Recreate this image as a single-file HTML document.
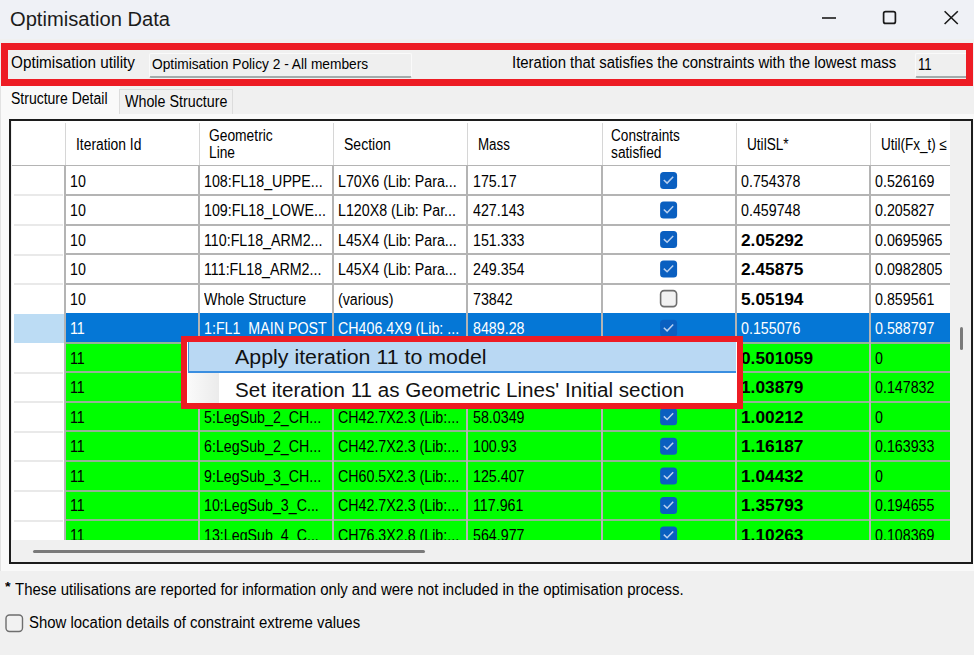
<!DOCTYPE html>
<html><head><meta charset="utf-8"><title>Optimisation Data</title>
<style>
html,body{margin:0;padding:0}
body{width:974px;height:655px;overflow:hidden;position:relative;background:#F0F0F0;font-family:"Liberation Sans",sans-serif;color:#000}
.a{position:absolute}
.t{position:absolute;white-space:nowrap;line-height:1;transform-origin:0 0}
</style></head><body>
<div class="a" style="left:0px;top:0px;width:974px;height:39px;background:#EFF1F6"></div>
<div class="t" style="left:9.60px;top:8.57px;font-size:20px;transform:scaleX(1.0070);color:#1b1b1b">Optimisation Data</div>
<svg class="a" style="left:0;top:0" width="974" height="40">
<line x1="822" y1="18" x2="836" y2="18" stroke="#1a1a1a" stroke-width="1.6"/>
<rect x="883.6" y="11.6" width="11.8" height="11.8" rx="2" fill="none" stroke="#1a1a1a" stroke-width="1.7"/>
<path d="M944.6 11.2 L957.8 24 M957.8 11.2 L944.6 24" stroke="#1a1a1a" stroke-width="1.6" fill="none"/>
</svg>
<div class="a" style="left:1px;top:43px;width:972px;height:43px;box-sizing:border-box;border:7px solid #ED1C24"></div>
<div class="t" style="left:11.00px;top:55.46px;font-size:16px;transform:scaleX(0.9551);">Optimisation utility</div>
<div class="a" style="left:149px;top:52.5px;width:263px;height:25.3px;box-sizing:border-box;background:#EFEFEF;border:1.5px solid #FAFAFA;border-bottom:2px solid #A3AAAA;border-radius:2px"></div>
<div class="t" style="left:151.50px;top:56.40px;font-size:15px;transform:scaleX(0.9165);">Optimisation Policy 2 - All members</div>
<div class="t" style="left:511.70px;top:55.36px;font-size:16px;transform:scaleX(0.9333);">Iteration that satisfies the constraints with the lowest mass</div>
<div class="a" style="left:915px;top:52.5px;width:51px;height:25.3px;box-sizing:border-box;background:#EFEFEF;border:1.5px solid #FAFAFA;border-right:none;border-bottom:2px solid #A3AAAA;border-radius:2px 0 0 2px"></div>
<div class="t" style="left:918.30px;top:57.16px;font-size:16px;transform:scaleX(0.8249);">11</div>
<div class="a" style="left:0px;top:113.5px;width:974px;height:457px;background:#F9F9F9;border-left:1.5px solid #E2E2E2"></div>
<div class="a" style="left:0px;top:86px;width:118.5px;height:28px;background:#F9F9F9;border-left:1.5px solid #E2E2E2"></div>
<div class="a" style="left:118.5px;top:88.5px;width:114px;height:25px;box-sizing:border-box;background:#F0F0F0;border:1px solid #DCDCDC;border-bottom:none"></div>
<div class="t" style="left:11.00px;top:91.46px;font-size:16px;transform:scaleX(0.8751);">Structure Detail</div>
<div class="t" style="left:124.60px;top:93.96px;font-size:16px;transform:scaleX(0.8927);">Whole Structure</div>
<div class="a" style="left:9px;top:119px;width:964px;height:445px;box-sizing:border-box;border:2px solid #1C1C1C;background:#F0F0F0"></div>
<div class="a" style="left:12px;top:121px;width:938px;height:44px;background:#fff"></div>
<div class="a" style="left:65px;top:123px;width:1px;height:42px;background:#D6D6D6"></div>
<div class="a" style="left:199px;top:123px;width:1px;height:42px;background:#D6D6D6"></div>
<div class="a" style="left:333px;top:123px;width:1px;height:42px;background:#D6D6D6"></div>
<div class="a" style="left:467px;top:123px;width:1px;height:42px;background:#D6D6D6"></div>
<div class="a" style="left:602px;top:123px;width:1px;height:42px;background:#D6D6D6"></div>
<div class="a" style="left:736px;top:123px;width:1px;height:42px;background:#D6D6D6"></div>
<div class="a" style="left:870px;top:123px;width:1px;height:42px;background:#D6D6D6"></div>
<div class="a" style="left:12px;top:165px;width:938px;height:2px;background:#B4B4B4"></div>
<div class="t" style="left:75.80px;top:136.96px;font-size:16px;transform:scaleX(0.8651);">Iteration Id</div>
<div class="t" style="left:209.00px;top:127.56px;font-size:16px;transform:scaleX(0.8632);">Geometric</div>
<div class="t" style="left:209.00px;top:145.06px;font-size:16px;transform:scaleX(0.8600);">Line</div>
<div class="t" style="left:343.80px;top:136.96px;font-size:16px;transform:scaleX(0.8752);">Section</div>
<div class="t" style="left:478.10px;top:136.96px;font-size:16px;transform:scaleX(0.8346);">Mass</div>
<div class="t" style="left:611.40px;top:127.56px;font-size:16px;transform:scaleX(0.8514);">Constraints</div>
<div class="t" style="left:611.40px;top:145.06px;font-size:16px;transform:scaleX(0.8600);">satisfied</div>
<div class="t" style="left:746.80px;top:136.96px;font-size:16px;transform:scaleX(0.8505);">UtilSL*</div>
<div class="t" style="left:880.60px;top:136.96px;font-size:16px;transform:scaleX(0.8449);">Util(Fx_t) ≤</div>
<div class="a" style="left:12px;top:166px;width:938px;height:374px;overflow:hidden">
<div class="a" style="left:0px;top:0px;width:938px;height:374px;background:#fff"></div>
<div class="a" style="left:54px;top:-0.5px;width:884px;height:29.6px;background:#fff"></div>
<div class="a" style="left:54px;top:29.1px;width:884px;height:29.6px;background:#fff"></div>
<div class="a" style="left:54px;top:58.6px;width:884px;height:29.6px;background:#fff"></div>
<div class="a" style="left:54px;top:88.2px;width:884px;height:29.6px;background:#fff"></div>
<div class="a" style="left:54px;top:117.7px;width:884px;height:29.6px;background:#fff"></div>
<div class="a" style="left:2px;top:147.7px;width:51px;height:29.2px;background:#BCDCF4"></div>
<div class="a" style="left:54px;top:147.2px;width:884px;height:29.6px;background:#0577D6"></div>
<div class="a" style="left:54px;top:176.8px;width:884px;height:29.6px;background:#00FF00"></div>
<div class="a" style="left:54px;top:206.4px;width:884px;height:29.6px;background:#00FF00"></div>
<div class="a" style="left:54px;top:235.9px;width:884px;height:29.6px;background:#00FF00"></div>
<div class="a" style="left:54px;top:265.4px;width:884px;height:29.6px;background:#00FF00"></div>
<div class="a" style="left:54px;top:295.0px;width:884px;height:29.6px;background:#00FF00"></div>
<div class="a" style="left:54px;top:324.6px;width:884px;height:29.6px;background:#00FF00"></div>
<div class="a" style="left:54px;top:354.1px;width:884px;height:29.6px;background:#00FF00"></div>
<div class="a" style="left:2px;top:28.4px;width:49px;height:2px;background:#E9E9E9"></div>
<div class="a" style="left:53px;top:28.1px;width:885px;height:2px;background:#B4B4B4"></div>
<div class="a" style="left:2px;top:58.0px;width:49px;height:2px;background:#E9E9E9"></div>
<div class="a" style="left:53px;top:57.6px;width:885px;height:2px;background:#B4B4B4"></div>
<div class="a" style="left:2px;top:87.5px;width:49px;height:2px;background:#E9E9E9"></div>
<div class="a" style="left:53px;top:87.1px;width:885px;height:2px;background:#B4B4B4"></div>
<div class="a" style="left:2px;top:117.1px;width:49px;height:2px;background:#E9E9E9"></div>
<div class="a" style="left:53px;top:116.7px;width:885px;height:2px;background:#B4B4B4"></div>
<div class="a" style="left:53px;top:175.8px;width:885px;height:2px;background:#94B494"></div>
<div class="a" style="left:2px;top:205.8px;width:49px;height:2px;background:#E9E9E9"></div>
<div class="a" style="left:53px;top:205.4px;width:885px;height:2px;background:#94B494"></div>
<div class="a" style="left:2px;top:235.3px;width:49px;height:2px;background:#E9E9E9"></div>
<div class="a" style="left:53px;top:234.9px;width:885px;height:2px;background:#94B494"></div>
<div class="a" style="left:2px;top:264.8px;width:49px;height:2px;background:#E9E9E9"></div>
<div class="a" style="left:53px;top:264.4px;width:885px;height:2px;background:#94B494"></div>
<div class="a" style="left:2px;top:294.4px;width:49px;height:2px;background:#E9E9E9"></div>
<div class="a" style="left:53px;top:294.0px;width:885px;height:2px;background:#94B494"></div>
<div class="a" style="left:2px;top:323.9px;width:49px;height:2px;background:#E9E9E9"></div>
<div class="a" style="left:53px;top:323.6px;width:885px;height:2px;background:#94B494"></div>
<div class="a" style="left:2px;top:353.5px;width:49px;height:2px;background:#E9E9E9"></div>
<div class="a" style="left:53px;top:353.1px;width:885px;height:2px;background:#94B494"></div>
<div class="a" style="left:2px;top:383.1px;width:49px;height:2px;background:#E9E9E9"></div>
<div class="a" style="left:53px;top:382.7px;width:885px;height:2px;background:#94B494"></div>
<div class="a" style="left:186.2px;top:0px;width:2px;height:374px;background:#B4B4B4"></div>
<div class="a" style="left:320.3px;top:0px;width:2px;height:374px;background:#B4B4B4"></div>
<div class="a" style="left:454.4px;top:0px;width:2px;height:374px;background:#B4B4B4"></div>
<div class="a" style="left:588.5px;top:0px;width:2px;height:374px;background:#B4B4B4"></div>
<div class="a" style="left:722.6px;top:0px;width:2px;height:374px;background:#B4B4B4"></div>
<div class="a" style="left:856.7px;top:0px;width:2px;height:374px;background:#B4B4B4"></div>
<div class="t" style="left:58.10px;top:7.56px;font-size:16px;transform:scaleX(0.8900);color:#000">10</div>
<div class="t" style="left:192.30px;top:7.56px;font-size:16px;transform:scaleX(0.8900);color:#000">108:FL18_UPPE...</div>
<div class="t" style="left:326.40px;top:7.56px;font-size:16px;transform:scaleX(0.8900);color:#000">L70X6 (Lib: Para...</div>
<div class="t" style="left:460.50px;top:7.56px;font-size:16px;transform:scaleX(0.8900);color:#000">175.17</div>
<svg class="a" style="left:647px;top:5px" width="20" height="20"><g transform="translate(0.60,0.40)"><rect x="0.5" y="0.5" width="17" height="17" rx="3.5" fill="#0A5FC0"/><path d="M4.2 8.6 L7.5 11.7 L13.6 5.4" stroke="#B8D0F0" stroke-width="1.5" fill="none"/></g></svg>
<div class="t" style="left:728.70px;top:7.56px;font-size:16px;transform:scaleX(0.8900);color:#000">0.754378</div>
<div class="t" style="left:862.80px;top:7.56px;font-size:16px;transform:scaleX(0.8900);color:#000">0.526169</div>
<div class="t" style="left:58.10px;top:37.09px;font-size:16px;transform:scaleX(0.8900);color:#000">10</div>
<div class="t" style="left:192.30px;top:37.09px;font-size:16px;transform:scaleX(0.8900);color:#000">109:FL18_LOWE...</div>
<div class="t" style="left:326.40px;top:37.09px;font-size:16px;transform:scaleX(0.8900);color:#000">L120X8 (Lib: Par...</div>
<div class="t" style="left:460.50px;top:37.09px;font-size:16px;transform:scaleX(0.8900);color:#000">427.143</div>
<svg class="a" style="left:647px;top:34px" width="20" height="20"><g transform="translate(0.60,0.95)"><rect x="0.5" y="0.5" width="17" height="17" rx="3.5" fill="#0A5FC0"/><path d="M4.2 8.6 L7.5 11.7 L13.6 5.4" stroke="#B8D0F0" stroke-width="1.5" fill="none"/></g></svg>
<div class="t" style="left:728.70px;top:37.09px;font-size:16px;transform:scaleX(0.8900);color:#000">0.459748</div>
<div class="t" style="left:862.80px;top:37.09px;font-size:16px;transform:scaleX(0.8900);color:#000">0.205827</div>
<div class="t" style="left:58.10px;top:66.62px;font-size:16px;transform:scaleX(0.8900);color:#000">10</div>
<div class="t" style="left:192.30px;top:66.62px;font-size:16px;transform:scaleX(0.8900);color:#000">110:FL18_ARM2...</div>
<div class="t" style="left:326.40px;top:66.62px;font-size:16px;transform:scaleX(0.8900);color:#000">L45X4 (Lib: Para...</div>
<div class="t" style="left:460.50px;top:66.62px;font-size:16px;transform:scaleX(0.8900);color:#000">151.333</div>
<svg class="a" style="left:647px;top:64px" width="20" height="20"><g transform="translate(0.60,0.50)"><rect x="0.5" y="0.5" width="17" height="17" rx="3.5" fill="#0A5FC0"/><path d="M4.2 8.6 L7.5 11.7 L13.6 5.4" stroke="#B8D0F0" stroke-width="1.5" fill="none"/></g></svg>
<div class="t" style="left:728.70px;top:66.62px;font-size:16px;transform:scaleX(1.0800);font-weight:bold;color:#000">2.05292</div>
<div class="t" style="left:862.80px;top:66.62px;font-size:16px;transform:scaleX(0.8900);color:#000">0.0695965</div>
<div class="t" style="left:58.10px;top:96.15px;font-size:16px;transform:scaleX(0.8900);color:#000">10</div>
<div class="t" style="left:192.30px;top:96.15px;font-size:16px;transform:scaleX(0.8900);color:#000">111:FL18_ARM2...</div>
<div class="t" style="left:326.40px;top:96.15px;font-size:16px;transform:scaleX(0.8900);color:#000">L45X4 (Lib: Para...</div>
<div class="t" style="left:460.50px;top:96.15px;font-size:16px;transform:scaleX(0.8900);color:#000">249.354</div>
<svg class="a" style="left:647px;top:94px" width="20" height="20"><g transform="translate(0.60,0.05)"><rect x="0.5" y="0.5" width="17" height="17" rx="3.5" fill="#0A5FC0"/><path d="M4.2 8.6 L7.5 11.7 L13.6 5.4" stroke="#B8D0F0" stroke-width="1.5" fill="none"/></g></svg>
<div class="t" style="left:728.70px;top:96.15px;font-size:16px;transform:scaleX(1.0800);font-weight:bold;color:#000">2.45875</div>
<div class="t" style="left:862.80px;top:96.15px;font-size:16px;transform:scaleX(0.8900);color:#000">0.0982805</div>
<div class="t" style="left:58.10px;top:125.68px;font-size:16px;transform:scaleX(0.8900);color:#000">10</div>
<div class="t" style="left:192.30px;top:125.68px;font-size:16px;transform:scaleX(0.8900);color:#000">Whole Structure</div>
<div class="t" style="left:326.40px;top:125.68px;font-size:16px;transform:scaleX(0.8900);color:#000">(various)</div>
<div class="t" style="left:460.50px;top:125.68px;font-size:16px;transform:scaleX(0.8900);color:#000">73842</div>
<svg class="a" style="left:647px;top:123px" width="20" height="20"><g transform="translate(0.60,0.60)"><rect x="1" y="1" width="16" height="16" rx="3.5" fill="#F2F2F2" stroke="#6E6E6E" stroke-width="1.6"/></g></svg>
<div class="t" style="left:728.70px;top:125.68px;font-size:16px;transform:scaleX(1.0800);font-weight:bold;color:#000">5.05194</div>
<div class="t" style="left:862.80px;top:125.68px;font-size:16px;transform:scaleX(0.8900);color:#000">0.859561</div>
<div class="t" style="left:58.10px;top:155.21px;font-size:16px;transform:scaleX(0.8900);color:#fff">11</div>
<div class="t" style="left:192.30px;top:155.21px;font-size:16px;transform:scaleX(0.8900);color:#fff">1:FL1_MAIN POST</div>
<div class="t" style="left:326.40px;top:155.21px;font-size:16px;transform:scaleX(0.8900);color:#fff">CH406.4X9 (Lib: ...</div>
<div class="t" style="left:460.50px;top:155.21px;font-size:16px;transform:scaleX(0.8900);color:#fff">8489.28</div>
<svg class="a" style="left:647px;top:153px" width="20" height="20"><g transform="translate(0.60,0.15)"><rect x="0.5" y="0.5" width="17" height="17" rx="3.5" fill="#0A5FC0"/><path d="M4.2 8.6 L7.5 11.7 L13.6 5.4" stroke="#B8D0F0" stroke-width="1.5" fill="none"/></g></svg>
<div class="t" style="left:728.70px;top:155.21px;font-size:16px;transform:scaleX(0.8900);color:#fff">0.155076</div>
<div class="t" style="left:862.80px;top:155.21px;font-size:16px;transform:scaleX(0.8900);color:#fff">0.588797</div>
<div class="t" style="left:58.10px;top:184.74px;font-size:16px;transform:scaleX(0.8900);color:#000">11</div>
<div class="t" style="left:192.30px;top:184.74px;font-size:16px;transform:scaleX(0.8900);color:#000">3:LegSub_1_CH...</div>
<div class="t" style="left:326.40px;top:184.74px;font-size:16px;transform:scaleX(0.8900);color:#000">CH48.6X2.3 (Lib:...</div>
<div class="t" style="left:460.50px;top:184.74px;font-size:16px;transform:scaleX(0.8900);color:#000">40.6148</div>
<svg class="a" style="left:647px;top:182px" width="20" height="20"><g transform="translate(0.60,0.70)"><rect x="0.5" y="0.5" width="17" height="17" rx="3.5" fill="#0A5FC0"/><path d="M4.2 8.6 L7.5 11.7 L13.6 5.4" stroke="#B8D0F0" stroke-width="1.5" fill="none"/></g></svg>
<div class="t" style="left:728.70px;top:184.74px;font-size:16px;transform:scaleX(1.0800);font-weight:bold;color:#000">0.501059</div>
<div class="t" style="left:862.80px;top:184.74px;font-size:16px;transform:scaleX(0.8900);color:#000">0</div>
<div class="t" style="left:58.10px;top:214.27px;font-size:16px;transform:scaleX(0.8900);color:#000">11</div>
<div class="t" style="left:192.30px;top:214.27px;font-size:16px;transform:scaleX(0.8900);color:#000">4:LegSub_1_CH...</div>
<div class="t" style="left:326.40px;top:214.27px;font-size:16px;transform:scaleX(0.8900);color:#000">CH42.7X2.3 (Lib:...</div>
<div class="t" style="left:460.50px;top:214.27px;font-size:16px;transform:scaleX(0.8900);color:#000">63.1427</div>
<svg class="a" style="left:647px;top:212px" width="20" height="20"><g transform="translate(0.60,0.25)"><rect x="0.5" y="0.5" width="17" height="17" rx="3.5" fill="#0A5FC0"/><path d="M4.2 8.6 L7.5 11.7 L13.6 5.4" stroke="#B8D0F0" stroke-width="1.5" fill="none"/></g></svg>
<div class="t" style="left:728.70px;top:214.27px;font-size:16px;transform:scaleX(1.0800);font-weight:bold;color:#000">1.03879</div>
<div class="t" style="left:862.80px;top:214.27px;font-size:16px;transform:scaleX(0.8900);color:#000">0.147832</div>
<div class="t" style="left:58.10px;top:243.80px;font-size:16px;transform:scaleX(0.8900);color:#000">11</div>
<div class="t" style="left:192.30px;top:243.80px;font-size:16px;transform:scaleX(0.8900);color:#000">5:LegSub_2_CH...</div>
<div class="t" style="left:326.40px;top:243.80px;font-size:16px;transform:scaleX(0.8900);color:#000">CH42.7X2.3 (Lib:...</div>
<div class="t" style="left:460.50px;top:243.80px;font-size:16px;transform:scaleX(0.8900);color:#000">58.0349</div>
<svg class="a" style="left:647px;top:241px" width="20" height="20"><g transform="translate(0.60,0.80)"><rect x="0.5" y="0.5" width="17" height="17" rx="3.5" fill="#0A5FC0"/><path d="M4.2 8.6 L7.5 11.7 L13.6 5.4" stroke="#B8D0F0" stroke-width="1.5" fill="none"/></g></svg>
<div class="t" style="left:728.70px;top:243.80px;font-size:16px;transform:scaleX(1.0800);font-weight:bold;color:#000">1.00212</div>
<div class="t" style="left:862.80px;top:243.80px;font-size:16px;transform:scaleX(0.8900);color:#000">0</div>
<div class="t" style="left:58.10px;top:273.33px;font-size:16px;transform:scaleX(0.8900);color:#000">11</div>
<div class="t" style="left:192.30px;top:273.33px;font-size:16px;transform:scaleX(0.8900);color:#000">6:LegSub_2_CH...</div>
<div class="t" style="left:326.40px;top:273.33px;font-size:16px;transform:scaleX(0.8900);color:#000">CH42.7X2.3 (Lib:...</div>
<div class="t" style="left:460.50px;top:273.33px;font-size:16px;transform:scaleX(0.8900);color:#000">100.93</div>
<svg class="a" style="left:647px;top:271px" width="20" height="20"><g transform="translate(0.60,0.35)"><rect x="0.5" y="0.5" width="17" height="17" rx="3.5" fill="#0A5FC0"/><path d="M4.2 8.6 L7.5 11.7 L13.6 5.4" stroke="#B8D0F0" stroke-width="1.5" fill="none"/></g></svg>
<div class="t" style="left:728.70px;top:273.33px;font-size:16px;transform:scaleX(1.0800);font-weight:bold;color:#000">1.16187</div>
<div class="t" style="left:862.80px;top:273.33px;font-size:16px;transform:scaleX(0.8900);color:#000">0.163933</div>
<div class="t" style="left:58.10px;top:302.86px;font-size:16px;transform:scaleX(0.8900);color:#000">11</div>
<div class="t" style="left:192.30px;top:302.86px;font-size:16px;transform:scaleX(0.8900);color:#000">9:LegSub_3_CH...</div>
<div class="t" style="left:326.40px;top:302.86px;font-size:16px;transform:scaleX(0.8900);color:#000">CH60.5X2.3 (Lib:...</div>
<div class="t" style="left:460.50px;top:302.86px;font-size:16px;transform:scaleX(0.8900);color:#000">125.407</div>
<svg class="a" style="left:647px;top:300px" width="20" height="20"><g transform="translate(0.60,0.90)"><rect x="0.5" y="0.5" width="17" height="17" rx="3.5" fill="#0A5FC0"/><path d="M4.2 8.6 L7.5 11.7 L13.6 5.4" stroke="#B8D0F0" stroke-width="1.5" fill="none"/></g></svg>
<div class="t" style="left:728.70px;top:302.86px;font-size:16px;transform:scaleX(1.0800);font-weight:bold;color:#000">1.04432</div>
<div class="t" style="left:862.80px;top:302.86px;font-size:16px;transform:scaleX(0.8900);color:#000">0</div>
<div class="t" style="left:58.10px;top:332.39px;font-size:16px;transform:scaleX(0.8900);color:#000">11</div>
<div class="t" style="left:192.30px;top:332.39px;font-size:16px;transform:scaleX(0.8900);color:#000">10:LegSub_3_C...</div>
<div class="t" style="left:326.40px;top:332.39px;font-size:16px;transform:scaleX(0.8900);color:#000">CH42.7X2.3 (Lib:...</div>
<div class="t" style="left:460.50px;top:332.39px;font-size:16px;transform:scaleX(0.8900);color:#000">117.961</div>
<svg class="a" style="left:647px;top:330px" width="20" height="20"><g transform="translate(0.60,0.45)"><rect x="0.5" y="0.5" width="17" height="17" rx="3.5" fill="#0A5FC0"/><path d="M4.2 8.6 L7.5 11.7 L13.6 5.4" stroke="#B8D0F0" stroke-width="1.5" fill="none"/></g></svg>
<div class="t" style="left:728.70px;top:332.39px;font-size:16px;transform:scaleX(1.0800);font-weight:bold;color:#000">1.35793</div>
<div class="t" style="left:862.80px;top:332.39px;font-size:16px;transform:scaleX(0.8900);color:#000">0.194655</div>
<div class="t" style="left:58.10px;top:361.92px;font-size:16px;transform:scaleX(0.8900);color:#000">11</div>
<div class="t" style="left:192.30px;top:361.92px;font-size:16px;transform:scaleX(0.8900);color:#000">13:LegSub_4_C...</div>
<div class="t" style="left:326.40px;top:361.92px;font-size:16px;transform:scaleX(0.8900);color:#000">CH76.3X2.8 (Lib:...</div>
<div class="t" style="left:460.50px;top:361.92px;font-size:16px;transform:scaleX(0.8900);color:#000">564.977</div>
<svg class="a" style="left:647px;top:360px" width="20" height="20"><g transform="translate(0.60,0.00)"><rect x="0.5" y="0.5" width="17" height="17" rx="3.5" fill="#0A5FC0"/><path d="M4.2 8.6 L7.5 11.7 L13.6 5.4" stroke="#B8D0F0" stroke-width="1.5" fill="none"/></g></svg>
<div class="t" style="left:728.70px;top:361.92px;font-size:16px;transform:scaleX(1.0800);font-weight:bold;color:#000">1.10263</div>
<div class="t" style="left:862.80px;top:361.92px;font-size:16px;transform:scaleX(0.8900);color:#000">0.108369</div>
</div>
<div class="a" style="left:64px;top:166px;width:2px;height:374px;background:#B4B4B4"></div>
<div class="a" style="left:950px;top:121px;width:21px;height:419px;background:#F0F0F0"></div>
<div class="a" style="left:960px;top:327px;width:3px;height:23px;background:#7A7A7A;border-radius:1.5px"></div>
<div class="a" style="left:12px;top:540px;width:959px;height:22px;background:#F0F0F0"></div>
<div class="a" style="left:33px;top:550px;width:392px;height:3px;background:#7A7A7A;border-radius:1.5px"></div>
<div class="t" style="left:14.50px;top:581.76px;font-size:16px;transform:scaleX(0.9352);">These utilisations are reported for information only and were not included in the optimisation process.</div>
<div class="t" style="left:5.20px;top:580.94px;font-size:12px;transform:scaleX(1.1997);font-weight:bold;">*</div>
<svg class="a" style="left:5px;top:614px" width="19" height="19"><rect x="1" y="1" width="16.5" height="16.5" rx="3.5" fill="#F2F2F2" stroke="#6E6E6E" stroke-width="1.4"/></svg>
<div class="t" style="left:28.70px;top:614.56px;font-size:16px;transform:scaleX(0.9331);">Show location details of constraint extreme values</div>
<div class="a" style="left:181px;top:335.5px;width:562px;height:73px;box-sizing:border-box;border:6.5px solid #ED1C24;background:#fff"></div>
<div class="a" style="left:188px;top:342px;width:548px;height:31px;box-sizing:border-box;background:#B9D8F3;border-left:1.5px solid #3A8EE0;border-bottom:2px solid #3A8EE0"></div>
<div class="a" style="left:188px;top:373px;width:31px;height:29.5px;background:linear-gradient(90deg,#FAFAFA,#EBEBEB)"></div>
<div class="t" style="left:235.20px;top:347.07px;font-size:20px;transform:scaleX(1.0688);color:#111">Apply iteration 11 to model</div>
<div class="t" style="left:235.20px;top:379.57px;font-size:20px;transform:scaleX(1.0303);color:#111">Set iteration 11 as Geometric Lines' Initial section</div>
</body></html>
